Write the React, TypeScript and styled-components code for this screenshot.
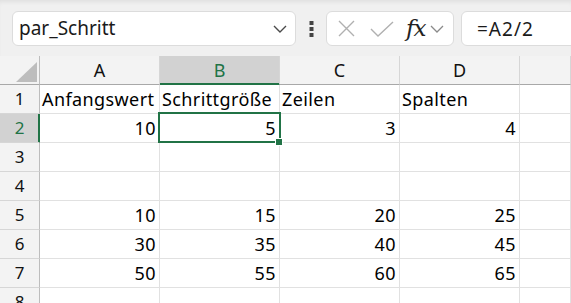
import styled, { createGlobalStyle } from "styled-components";

const GREEN = "#217346";

const GlobalStyle = createGlobalStyle`
  html, body { margin: 0; padding: 0; background: #ffffff; }
  body { font-family: "Noto Sans", sans-serif; overflow: hidden; color: #111; }
`;

const COLS = ["A", "B", "C", "D", ""];
type Value = string | number | null;
const ROWS: Value[][] = [
  ["Anfangswert", "Schrittgröße", "Zeilen", "Spalten"],
  [10, 5, 3, 4],
  [null, null, null, null],
  [null, null, null, null],
  [10, 15, 20, 25],
  [30, 35, 40, 45],
  [50, 55, 60, 65],
  [null, null, null, null],
];
const SEL_COL = 1;
const SEL_ROW = 1;

export default function App() {
  return (
    <Page>
      <GlobalStyle />
      <Toolbar>
        <NameBox>
          <NameText>par_Schritt</NameText>
          <svg width="14" height="8" viewBox="0 0 14 8">
            <path d="M1 1 L7 7 L13 1" fill="none" stroke="#4a4a4a" strokeWidth="1.4" />
          </svg>
        </NameBox>
        <Dots>
          <svg width="5" height="16" viewBox="0 0 5 16">
            <rect x="0.5" y="0" width="4" height="4" fill="#444" />
            <rect x="0.5" y="6" width="4" height="4" fill="#444" />
            <rect x="0.5" y="12" width="4" height="4" fill="#444" />
          </svg>
        </Dots>
        <FxBox>
          <IconSlot $ml={11}>
            <svg width="17" height="17" viewBox="0 0 17 17">
              <path d="M1 1 L16 16 M16 1 L1 16" stroke="#b0b0b0" strokeWidth="1.4" fill="none" />
            </svg>
          </IconSlot>
          <IconSlot $ml={15}>
            <svg width="24" height="16" viewBox="0 0 24 16">
              <path d="M1 8 L8 15 L23 1" stroke="#b0b0b0" strokeWidth="1.4" fill="none" />
            </svg>
          </IconSlot>
          <FxLabel>fx</FxLabel>
          <IconSlot $ml={5}>
            <svg width="14" height="8" viewBox="0 0 14 8">
              <path d="M1 1 L7 7 L13 1" fill="none" stroke="#8a8a8a" strokeWidth="1.3" />
            </svg>
          </IconSlot>
        </FxBox>
        <FormulaBox>=A2/2</FormulaBox>
      </Toolbar>

      <Grid>
        <Corner>
          <svg width="21" height="20" viewBox="0 0 21 20">
            <path d="M21 0 L21 20 L0 20 Z" fill="#bdbdbd" />
          </svg>
        </Corner>
        {COLS.map((c, i) => (
          <ColHeader key={c || "e"} $selected={i === SEL_COL}>
            {c}
          </ColHeader>
        ))}
        {ROWS.map((row, r) => (
          <RowGroup key={r}>
            <RowHeader $selected={r === SEL_ROW}>{r + 1}</RowHeader>
            {row.map((v, c) => (
              <Cell key={c} $num={typeof v === "number"}>
                {v}
                {r === SEL_ROW && c === SEL_COL && (
                  <Selection>
                    <Handle />
                  </Selection>
                )}
              </Cell>
            ))}
            <Cell $num={false} />
          </RowGroup>
        ))}
      </Grid>
    </Page>
  );
}

const Page = styled.div`
  width: 571px;
  height: 303px;
  overflow: hidden;
  display: flex;
  flex-direction: column;
`;

const Toolbar = styled.div`
  height: 56px;
  flex: none;
  box-sizing: border-box;
  background: #f0f0f0;
  box-shadow: inset 0 4px 4px -2px rgba(0, 0, 0, 0.07);
  display: flex;
  align-items: flex-start;
  padding: 11px 0 0 12px;
`;

const Box = styled.div`
  height: 35px;
  box-sizing: border-box;
  background: #ffffff;
  border: 1px solid #dcdcdc;
  border-radius: 6px;
  display: flex;
  align-items: center;
`;

const NameBox = styled(Box)`
  width: 284px;
  padding: 0 8px 0 6px;
  justify-content: space-between;
`;

const NameText = styled.span`
  font-size: 19px;
  color: #1a1a1a;
  line-height: 33px;
`;

const Dots = styled.div`
  width: 5px;
  margin: 10px 12px 0 13px;
  display: flex;
`;

const FxBox = styled(Box)`
  width: 128px;
`;

const IconSlot = styled.span<{ $ml: number }>`
  display: flex;
  margin-left: ${({ $ml }) => $ml}px;
`;

const FxLabel = styled.span`
  margin-left: 12px;
  font-family: "DejaVu Serif", serif;
  font-style: italic;
  font-size: 23px;
  color: #222;
  line-height: 33px;
  letter-spacing: -1px;
`;

const FormulaBox = styled(Box)`
  flex: 1;
  margin-left: 7px;
  margin-right: -10px;
  padding-left: 15px;
  font-size: 19px;
  letter-spacing: 1px;
  color: #1a1a1a;
`;

const Grid = styled.div`
  display: grid;
  grid-template-columns: 40px repeat(4, 120px) 1fr;
  grid-auto-rows: 29px;
`;

const RowGroup = styled.div`
  display: contents;
`;

const HeaderBase = styled.div`
  box-sizing: border-box;
  background: #f3f3f3;
  line-height: 28px;
  text-align: center;
  color: #111;
`;

const Corner = styled(HeaderBase)`
  border-right: 1px solid #bdbdbd;
  border-bottom: 1px solid #a8a8a8;
  display: flex;
  align-items: flex-end;
  justify-content: flex-end;
  padding: 0 2px 2px 0;
`;

const ColHeader = styled(HeaderBase)<{ $selected: boolean }>`
  font-size: 18px;
  border-right: 1px solid #d6d6d6;
  border-bottom: 1px solid ${({ $selected }) => ($selected ? GREEN : "#a8a8a8")};
  background: ${({ $selected }) => ($selected ? "#d2d2d2" : "#f3f3f3")};
  color: ${({ $selected }) => ($selected ? GREEN : "#111")};
  box-shadow: ${({ $selected }) => ($selected ? `inset 0 -1px 0 ${GREEN}` : "none")};
`;

const RowHeader = styled(HeaderBase)<{ $selected: boolean }>`
  font-size: 17px;
  border-bottom: 1px solid #d6d6d6;
  border-right: 1px solid ${({ $selected }) => ($selected ? GREEN : "#bdbdbd")};
  background: ${({ $selected }) => ($selected ? "#d2d2d2" : "#f3f3f3")};
  color: ${({ $selected }) => ($selected ? GREEN : "#111")};
  box-shadow: ${({ $selected }) => ($selected ? `inset -1px 0 0 ${GREEN}` : "none")};
`;

const Cell = styled.div<{ $num: boolean }>`
  position: relative;
  box-sizing: border-box;
  border-right: 1px solid #e1e1e1;
  border-bottom: 1px solid #e1e1e1;
  padding: 0 3px 0 2px;
  font-size: 18px;
  letter-spacing: 0.4px;
  line-height: 28px;
  white-space: nowrap;
  overflow: visible;
  text-align: ${({ $num }) => ($num ? "right" : "left")};
  color: #000;
`;

const Selection = styled.div`
  position: absolute;
  left: -2px;
  top: -2px;
  width: 123px;
  height: 31px;
  box-sizing: border-box;
  border: 2px solid ${GREEN};
  pointer-events: none;
  z-index: 2;
`;

const Handle = styled.div`
  position: absolute;
  right: -4px;
  bottom: -5px;
  width: 8px;
  height: 8px;
  box-sizing: border-box;
  background: ${GREEN};
  border: 1px solid #ffffff;
`;
